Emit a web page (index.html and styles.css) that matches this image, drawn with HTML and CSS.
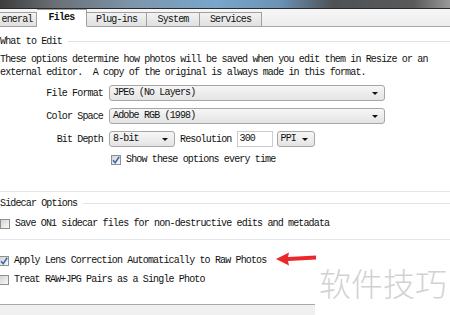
FILE: index.html
```html
<!DOCTYPE html>
<html lang="en">
<head>
    <meta charset="UTF-8">
    <meta name="viewport" content="width=device-width, initial-scale=1.0">
    <title>Preferences - Files</title>
    <link rel="stylesheet" href="styles.css">
</head>
<body>
    <div class="titlebar"></div>
    <div class="tabs">
        <div class="tab first">eneral</div>
        <div class="tab active">Files</div>
        <div class="tab">Plug-ins</div>
        <div class="tab">System</div>
        <div class="tab">Services</div>
    </div>

    <div class="panel">
        <div class="group-head"><span>What to Edit</span></div>
        <p class="desc">These options determine how photos will be saved when you edit them in Resize or an<br>external editor.  A copy of the original is always made in this format.</p>

        <div class="form-row">
            <label class="lbl">File Format</label>
            <div class="select wide">JPEG (No Layers)<span class="caret"></span></div>
        </div>
        <div class="form-row">
            <label class="lbl">Color Space</label>
            <div class="select wide">Adobe RGB (1998)<span class="caret"></span></div>
        </div>
        <div class="form-row">
            <label class="lbl">Bit Depth</label>
            <div class="select bits">8-bit<span class="caret"></span></div>
            <span class="inline-lbl">Resolution</span>
            <div class="textbox">300</div>
            <div class="select unit">PPI<span class="caret"></span></div>
        </div>
        <div class="check-row indent">
            <span class="cb checked"><svg viewBox="0 0 10 10"><path d="M2 5.2 L4.2 7.6 L8.2 1.8" fill="none" stroke="#3d6db5" stroke-width="1.6"/></svg></span>
            Show these options every time
        </div>

        <div class="sep first-sep"></div>

        <div class="group-head sidecar"><span>Sidecar Options</span></div>
        <div class="check-row save">
            <span class="cb"></span>
            Save ON1 sidecar files for non-destructive edits and metadata
        </div>

        <div class="sep"></div>

        <div class="check-row apply">
            <span class="cb checked"><svg viewBox="0 0 10 10"><path d="M2 5.2 L4.2 7.6 L8.2 1.8" fill="none" stroke="#3d6db5" stroke-width="1.6"/></svg></span>
            Apply Lens Correction Automatically to Raw Photos
        </div>
        <div class="check-row treat">
            <span class="cb"></span>
            Treat RAW+JPG Pairs as a Single Photo
        </div>

        <div class="footer"></div>
    </div>

    <svg class="arrow" width="42" height="16" viewBox="0 0 42 16">
        <path d="M0 8 L13 1.5 L12 6 L40 4.5 L40 8.5 L12 10 L13 14.5 Z" fill="#e8282a"/>
    </svg>
    <div class="watermark">软件技巧</div>
</body>
</html>
```

FILE: styles.css
```css
body {
    margin: 0;
    width: 450px;
    height: 315px;
    overflow: hidden;
    background: #fff;
    font-family: "Liberation Mono", "Noto Sans CJK SC", monospace;
    font-size: 10px;
    letter-spacing: -0.85px;
    color: #111;
    position: relative;
}
.titlebar {
    height: 8px;
    background: linear-gradient(to right, #3c3c3c 0%, #6a6f75 12%, #7d96ad 30%, #78a6cc 48%, #6c93b6 62%, #4e5256 74%, #5a5a5a 92%, #9a9a9a 100%);
    border-bottom: 1px solid #2a2a2a;
}
.tabs {
    display: flex;
    align-items: flex-end;
    height: 17px;
    background: linear-gradient(#f7f7f7, #ececec);
    border-bottom: 1px solid #a9a9a9;
}
.tab {
    box-sizing: border-box;
    height: 15px;
    line-height: 13px;
    margin-bottom: -1px;
    background: linear-gradient(#f2f2f2, #e0e0e0);
    border: 1px solid #a0a0a0;
    border-left: none;
    text-align: center;
}
.tab.first {
    width: 37px;
    text-indent: -2px;
}
.tab.active {
    height: 18px;
    line-height: 16px;
    width: 50px;
    background: #fff;
    border-bottom: 1px solid #fff;
    font-weight: bold;
}
.tab:nth-child(3) { width: 60px; }
.tab:nth-child(4) { width: 53px; }
.tab:nth-child(5) { width: 62px; }

.panel {
    padding-top: 8px;
}
.group-head {
    display: flex;
    align-items: center;
    height: 13px;
    line-height: 13px;
}
.group-head::after {
    content: "";
    flex: 1;
    height: 1px;
    margin-left: 6px;
    background: #dfe3e8;
}
.desc {
    margin: 5px 0 0;
    line-height: 13px;
    white-space: pre;
}
.form-row {
    display: flex;
    align-items: center;
    height: 16px;
    margin-top: 7px;
}
.desc + .form-row {
    margin-top: 6px;
}
.lbl {
    width: 103px;
    text-align: right;
    margin-right: 6px;
}
.select {
    position: relative;
    box-sizing: border-box;
    height: 16px;
    line-height: 14px;
    padding-left: 3px;
    border: 1px solid #a6a6a6;
    border-radius: 3px;
    background: linear-gradient(#f6f6f6, #e4e4e4);
}
.select.wide { width: 276px; }
.select.bits { width: 66px; }
.select.unit { width: 38px; margin-left: 4px; }
.caret {
    position: absolute;
    right: 6px;
    top: 6px;
    border-left: 3px solid transparent;
    border-right: 3px solid transparent;
    border-top: 3px solid #111;
}
.inline-lbl {
    margin-left: 5px;
}
.textbox {
    box-sizing: border-box;
    width: 36px;
    height: 16px;
    line-height: 14px;
    margin-left: 5px;
    padding-left: 2px;
    border: 1px solid #c9ccd2;
    background: #fff;
}
.check-row {
    display: flex;
    align-items: center;
    height: 13px;
    margin-top: 6px;
}
.check-row.indent {
    padding-left: 111px;
}
.cb {
    box-sizing: border-box;
    width: 10px;
    height: 10px;
    margin-right: 5px;
    border: 1px solid #8e8f8f;
    background: linear-gradient(135deg, #d4d4d4, #f8f8f8);
    display: flex;
}
.cb svg {
    width: 10px;
    height: 10px;
    margin: -1px;
}
.check-row.apply .cb,
.check-row.treat .cb {
    margin-left: -1px;
}
.sep {
    height: 1px;
    background: #e1e7ee;
    margin-top: 9px;
}
.sep.first-sep {
    margin-top: 25px;
}
.group-head.sidecar {
    margin-top: 5px;
}
.check-row.save {
    margin-top: 7px;
}
.check-row.apply {
    margin-top: 14px;
}
.check-row.treat {
    margin-top: 6px;
}
.footer {
    width: 315px;
    height: 20px;
    margin-top: 18px;
    border-top: 1px solid #a8a8a8;
    background: #f0f0f0;
}
.arrow {
    position: absolute;
    left: 276px;
    top: 251px;
}
.watermark {
    position: absolute;
    left: 315px;
    top: 262px;
    width: 135px;
    height: 53px;
    padding: 2px 0 0 4px;
    box-sizing: border-box;
    background: #fff;
    font-family: "Noto Sans CJK SC", sans-serif;
    font-weight: 300;
    font-size: 32px;
    letter-spacing: 0;
    line-height: 36px;
    color: #d2d2d2;
}
```
